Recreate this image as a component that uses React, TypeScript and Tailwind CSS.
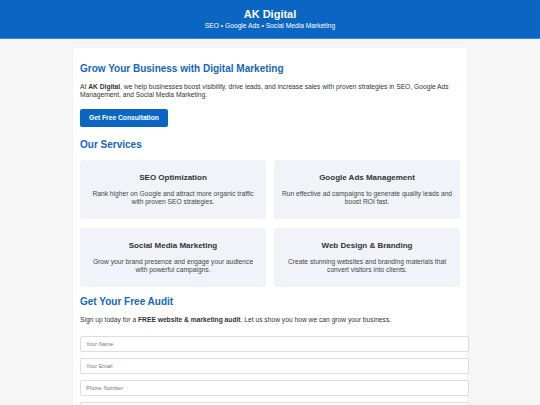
const services = [
  {
    title: "SEO Optimization",
    desc: "Rank higher on Google and attract more organic traffic with proven SEO strategies.",
  },
  {
    title: "Google Ads Management",
    desc: "Run effective ad campaigns to generate quality leads and boost ROI fast.",
  },
  {
    title: "Social Media Marketing",
    desc: "Grow your brand presence and engage your audience with powerful campaigns.",
  },
  {
    title: "Web Design & Branding",
    desc: "Create stunning websites and branding materials that convert visitors into clients.",
  },
];

function ServiceCard({ title, desc }: { title: string; desc: string }) {
  return (
    <div className="rounded-[3px] bg-[#f0f4f9] px-[7px] py-[13px] text-center">
      <h3 className="mb-[7px] text-[8px] leading-[10px] font-bold text-[#333]">{title}</h3>
      <p className="text-[6.7px] leading-[8px] text-[#444]">{desc}</p>
    </div>
  );
}

export default function App() {
  return (
    <div
      className="min-h-[405px] bg-[#f6f6f6] text-[#333]"
      style={{ fontFamily: '"Liberation Sans", Arial, sans-serif' }}
    >
      {/* Header */}
      <header className="flex h-[39px] flex-col items-center justify-center border-b border-[#3f8ad6] bg-[#0b66c3] pb-[1px] text-white">
        <h1 className="text-[11px] leading-[13px] font-bold">AK Digital</h1>
        <p className="mt-[1px] text-[6.7px] leading-[8px]">
          SEO • Google Ads • Social Media Marketing
        </p>
      </header>

      {/* Main card */}
      <main className="pt-[9px]">
        <div className="mx-auto w-[394px] rounded-[4px] bg-white px-[7px] pt-[14px] pb-[10px] shadow-[0_0_3px_rgba(0,0,0,0.05)]">
          <h2 className="text-[10px] leading-[14px] font-bold text-[#1565c0]">
            Grow Your Business with Digital Marketing
          </h2>
          <p className="mt-[7px] text-[6.7px] leading-[8px] text-[#333]">
            At <strong>AK Digital</strong>, we help businesses boost visibility, drive leads, and
            increase sales with proven strategies in SEO, Google Ads Management, and Social Media
            Marketing.
          </p>
          <button className="mt-[10px] h-[18px] rounded-[2px] bg-[#0b66c3] px-[9px] text-[6.7px] font-bold text-white">
            Get Free Consultation
          </button>

          <h2 className="mt-[11px] text-[10px] leading-[14px] font-bold text-[#1565c0]">
            Our Services
          </h2>
          <div className="mt-[8px] grid grid-cols-2 gap-x-[8px] gap-y-[9px]">
            {services.map((s) => (
              <ServiceCard key={s.title} title={s.title} desc={s.desc} />
            ))}
          </div>

          <h2 className="mt-[8px] text-[10px] leading-[14px] font-bold text-[#1565c0]">
            Get Your Free Audit
          </h2>
          <p className="mt-[7px] text-[6.7px] leading-[8px] text-[#333]">
            Sign up today for a <strong>FREE website &amp; marketing audit</strong>. Let us show you
            how we can grow your business.
          </p>
          <form className="mt-[12px] flex flex-col gap-[6px]">
            {["Your Name", "Your Email", "Phone Number", "Website URL"].map((ph) => (
              <input
                key={ph}
                placeholder={ph}
                className="h-[16px] w-[389px] rounded-[2px] border border-[#ddd] bg-white px-[5px] text-[5.5px] text-[#333] placeholder:text-[#777] outline-none"
              />
            ))}
          </form>
        </div>
      </main>
    </div>
  );
}
